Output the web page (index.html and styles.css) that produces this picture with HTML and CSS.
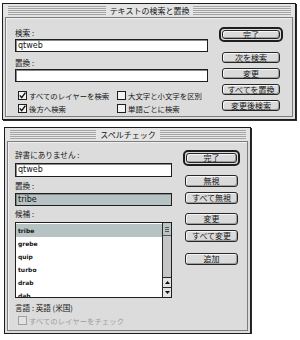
FILE: index.html
```html
<!DOCTYPE html>
<html lang="ja">
<head>
<meta charset="utf-8">
<link rel="stylesheet" href="styles.css">
</head>
<body>
<div class="page">
  <div class="win win-find">
    <div class="title"><span class="stripes"></span><span class="title-text">テキストの検索と置換</span><span class="stripes"></span></div>
    <div class="body">
      <div class="col-left">
        <div class="label">検索 :</div>
        <div class="field">qtweb</div>
        <div class="label label-2">置換 :</div>
        <div class="field field-2"></div>
        <div class="checks">
          <div class="check"><span class="box"><svg width="7" height="7" viewBox="0 0 7 7"><path d="M0.8 3.4 L2.7 5.6 L6.4 0.6" fill="none" stroke="#111" stroke-width="1.4"/></svg></span>すべてのレイヤーを検索</div>
          <div class="check"><span class="box"></span>大文字と小文字を区別</div>
          <div class="check"><span class="box"><svg width="7" height="7" viewBox="0 0 7 7"><path d="M0.8 3.4 L2.7 5.6 L6.4 0.6" fill="none" stroke="#111" stroke-width="1.4"/></svg></span>後方へ検索</div>
          <div class="check"><span class="box"></span>単語ごとに検索</div>
        </div>
      </div>
      <div class="col-right">
        <div class="default"><div class="btn">完了</div></div>
        <div class="btn btn-first">次を検索</div>
        <div class="btn">変更</div>
        <div class="btn">すべてを置換</div>
        <div class="btn">変更後検索</div>
      </div>
    </div>
  </div>

  <div class="win win-spell">
    <div class="title"><span class="stripes"></span><span class="title-text">スペルチェック</span><span class="stripes"></span></div>
    <div class="body">
      <div class="col-left">
        <div class="label">辞書にありません :</div>
        <div class="field field-word">qtweb</div>
        <div class="label label-rep">置換 :</div>
        <div class="field field-grey">tribe</div>
        <div class="label label-cand">候補 :</div>
        <div class="list">
          <div class="items">
            <div class="item sel">tribe</div>
            <div class="item">grebe</div>
            <div class="item">quip</div>
            <div class="item">turbo</div>
            <div class="item">drab</div>
            <div class="item">dab</div>
          </div>
          <div class="scroll">
            <div class="thumb"><span class="grip"></span></div>
            <div class="track"></div>
            <div class="arrow"><svg width="5" height="3" viewBox="0 0 5 3"><path d="M0 3 L2.5 0 L5 3 Z" fill="#111"/></svg></div>
            <div class="arrow"><svg width="5" height="3" viewBox="0 0 5 3"><path d="M0 0 L2.5 3 L5 0 Z" fill="#111"/></svg></div>
          </div>
        </div>
        <div class="label label-lang">言語 : 英語 (米国)</div>
        <div class="check check-dim"><span class="box"></span>すべてのレイヤーをチェック</div>
      </div>
      <div class="col-right">
        <div class="default"><div class="btn">完了</div></div>
        <div class="btn b-ignore">無視</div>
        <div class="btn b-small">すべて無視</div>
        <div class="btn b-change">変更</div>
        <div class="btn b-small">すべて変更</div>
        <div class="btn b-add">追加</div>
      </div>
    </div>
  </div>
</div>
</body>
</html>
```

FILE: styles.css
```css
* { box-sizing: border-box; }
html, body { margin: 0; padding: 0; background: #fff; }
body {
  font-family: "Noto Sans CJK JP", "Noto Sans", sans-serif;
  font-size: 7.6px;
  line-height: 10px;
  color: #151515;
}
.page {
  display: flex;
  flex-direction: column;
  align-items: flex-start;
  padding-top: 3px;
}
.win {
  background: #dcdcdc;
  border: 1px solid #1c1c1c;
  box-shadow: 1px 1px 0 #2a2a2a;
  padding: 0 2px 2px;
}
.win-find { width: 294px; margin-left: 2px; }
.win-spell { width: 247px; margin-left: 4px; margin-top: 7px; }

.title {
  height: 13px;
  margin: 0 -2px;
  padding: 0 4px 0 5px;
  display: flex;
  align-items: center;
  background: #e4e4e4;
}
.stripes {
  flex: 1;
  height: 9px;
  background: repeating-linear-gradient(to bottom, #a4a4a4 0 1px, #e8e8e8 1px 2px);
}
.title-text {
  padding: 0 4px;
  font-size: 8px;
  line-height: 13px;
  white-space: nowrap;
}

.body {
  border: 1px solid #7c7c7c;
  box-shadow: inset 1px 1px 0 #f0f0f0;
  display: flex;
}
.win-find .body { padding: 0 9px 2px 9px; }
.win-spell .body { padding: 0 7px 4px 7px; }

.col-left { display: flex; flex-direction: column; }
.win-find .col-left { width: 193px; padding-top: 10px; }
.win-spell .col-left { width: 157px; padding-top: 8px; }

.col-right { display: flex; flex-direction: column; align-items: center; }
.win-find .col-right { width: 64px; margin-left: 11px; padding-top: 9px; }
.win-spell .col-right { width: 57px; margin-left: 11px; padding-top: 8px; }

.label { height: 10px; white-space: nowrap; }
.label-2 { margin-top: 6px; }

.field {
  height: 13px;
  margin-top: 1px;
  background: #fff;
  border: 1px solid #1e1e1e;
  box-shadow: inset 1px 1px 0 #8a8a8a;
  font-family: "DejaVu Sans", sans-serif;
  font-size: 8px;
  line-height: 11px;
  padding-left: 2px;
}
.field-word { height: 14px; margin-top: 3px; line-height: 12px; }
.label-rep { margin-top: 4px; }
.field-grey { margin-top: 2px; background: #b7c3c3; box-shadow: inset 1px 1px 0 #7f8a8a; }
.label-cand { margin-top: 3px; }
.label-lang { margin-top: 5px; }

.checks {
  margin-top: 8px;
  display: grid;
  grid-template-columns: 99px auto;
  row-gap: 2px;
}
.check {
  height: 11px;
  display: flex;
  align-items: center;
  white-space: nowrap;
  font-size: 7.4px;
}
.box {
  width: 9px;
  height: 9px;
  margin: 0 2px 0 3px;
  border: 1px solid #1e1e1e;
  background: #f2f2f2;
  display: flex;
  align-items: center;
  justify-content: center;
  flex: none;
}
.check-dim { margin-top: 2px; color: #9c9c9c; }
.check-dim .box { border-color: #a0a0a0; background: #e2e2e2; }

.btn {
  width: 58px;
  height: 11px;
  border: 1px solid #262626;
  border-radius: 3px;
  background: #dadada;
  box-shadow: inset 1px 1px 0 #f6f6f6, inset -1px -1px 0 #9e9e9e;
  font-size: 8px;
  line-height: 9px;
  text-align: center;
  white-space: nowrap;
  margin-top: 5px;
}
.default {
  width: 64px;
  height: 15px;
  border: 2px solid #1e1e1e;
  border-radius: 5px;
  padding: 1px;
}
.default .btn { width: 100%; height: 100%; margin: 0; line-height: 7px; }
.btn-first { margin-top: 10px; }

.win-spell .btn { width: 53px; height: 12px; line-height: 10px; }
.win-spell .default { width: 57px; height: 16px; }
.win-spell .default .btn { width: 100%; height: 100%; line-height: 8px; }
.b-ignore { margin-top: 9px; }
.b-change { margin-top: 9px !important; }
.b-add { margin-top: 11px !important; }

.list {
  margin-top: 3px;
  height: 76px;
  border: 1px solid #1e1e1e;
  background: #fff;
  display: flex;
}
.items { flex: 1; padding-top: 1px; overflow: hidden; }
.item {
  height: 13px;
  line-height: 13px;
  padding-left: 2px;
  font-family: "DejaVu Sans", sans-serif;
  font-weight: bold;
  font-size: 6px;
}
.item.sel { background: #b7c3c3; }
.scroll {
  width: 9px;
  border-left: 1px solid #2a2a2a;
  background: #c6c6c6;
  display: flex;
  flex-direction: column;
}
.thumb {
  height: 13px;
  background: #b9c4c4;
  border-bottom: 1px solid #555;
  display: flex;
  align-items: center;
  justify-content: center;
}
.grip {
  width: 4px;
  height: 5px;
  background: repeating-linear-gradient(to bottom, #555 0 1px, transparent 1px 2px);
}
.track { flex: 1; }
.arrow {
  height: 10px;
  border-top: 1px solid #2a2a2a;
  background: #e4e4e4;
  display: flex;
  align-items: center;
  justify-content: center;
}
```
